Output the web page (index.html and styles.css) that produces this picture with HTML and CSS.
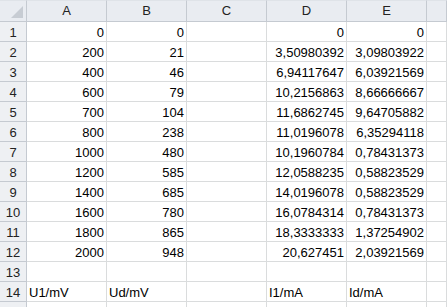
FILE: index.html
```html
<!DOCTYPE html>
<html lang="en">
<head>
    <meta charset="UTF-8">
    <title>Sheet1</title>
    <link rel="stylesheet" href="styles.css">
</head>
<body>
    <div class="sheet">
        <div class="corner"><span class="tri"></span></div>
        <div class="colhead">A</div>
        <div class="colhead">B</div>
        <div class="colhead">C</div>
        <div class="colhead">D</div>
        <div class="colhead">E</div>
        <div class="colhead"></div>

        <div class="rowhead">1</div><div class="cell num">0</div><div class="cell num">0</div><div class="cell"></div><div class="cell num">0</div><div class="cell num">0</div><div class="cell"></div>
        <div class="rowhead">2</div><div class="cell num">200</div><div class="cell num">21</div><div class="cell"></div><div class="cell num">3,50980392</div><div class="cell num">3,09803922</div><div class="cell"></div>
        <div class="rowhead">3</div><div class="cell num">400</div><div class="cell num">46</div><div class="cell"></div><div class="cell num">6,94117647</div><div class="cell num">6,03921569</div><div class="cell"></div>
        <div class="rowhead">4</div><div class="cell num">600</div><div class="cell num">79</div><div class="cell"></div><div class="cell num">10,2156863</div><div class="cell num">8,66666667</div><div class="cell"></div>
        <div class="rowhead">5</div><div class="cell num">700</div><div class="cell num">104</div><div class="cell"></div><div class="cell num">11,6862745</div><div class="cell num">9,64705882</div><div class="cell"></div>
        <div class="rowhead">6</div><div class="cell num">800</div><div class="cell num">238</div><div class="cell"></div><div class="cell num">11,0196078</div><div class="cell num">6,35294118</div><div class="cell"></div>
        <div class="rowhead">7</div><div class="cell num">1000</div><div class="cell num">480</div><div class="cell"></div><div class="cell num">10,1960784</div><div class="cell num">0,78431373</div><div class="cell"></div>
        <div class="rowhead">8</div><div class="cell num">1200</div><div class="cell num">585</div><div class="cell"></div><div class="cell num">12,0588235</div><div class="cell num">0,58823529</div><div class="cell"></div>
        <div class="rowhead">9</div><div class="cell num">1400</div><div class="cell num">685</div><div class="cell"></div><div class="cell num">14,0196078</div><div class="cell num">0,58823529</div><div class="cell"></div>
        <div class="rowhead">10</div><div class="cell num">1600</div><div class="cell num">780</div><div class="cell"></div><div class="cell num">16,0784314</div><div class="cell num">0,78431373</div><div class="cell"></div>
        <div class="rowhead">11</div><div class="cell num">1800</div><div class="cell num">865</div><div class="cell"></div><div class="cell num">18,3333333</div><div class="cell num">1,37254902</div><div class="cell"></div>
        <div class="rowhead">12</div><div class="cell num">2000</div><div class="cell num">948</div><div class="cell"></div><div class="cell num">20,627451</div><div class="cell num">2,03921569</div><div class="cell"></div>
        <div class="rowhead">13</div><div class="cell"></div><div class="cell"></div><div class="cell"></div><div class="cell"></div><div class="cell"></div><div class="cell"></div>
        <div class="rowhead">14</div><div class="cell">U1/mV</div><div class="cell">Ud/mV</div><div class="cell"></div><div class="cell">I1/mA</div><div class="cell">Id/mA</div><div class="cell"></div>
        <div class="rowhead"></div><div class="cell"></div><div class="cell"></div><div class="cell"></div><div class="cell"></div><div class="cell"></div><div class="cell"></div>
    </div>
</body>
</html>
```

FILE: styles.css
```css
body {
    margin: 0;
    background: #fff;
    font-family: "Liberation Sans", Arial, sans-serif;
    font-size: 13px;
    color: #000;
}
.sheet {
    display: grid;
    grid-template-columns: 27px repeat(5, 80px) 1fr;
    grid-template-rows: 22px repeat(15, 20px);
    overflow: hidden;
    height: 307px;
}
.corner, .colhead, .rowhead, .cell {
    box-sizing: border-box;
    border-right: 1px solid #dadcdd;
    border-bottom: 1px solid #dadcdd;
    white-space: nowrap;
    overflow: hidden;
}
.corner, .colhead {
    background: #e9ecf1;
    border-color: #c5cad1;
    border-top: 1px solid #dfe3e8;
}
.corner {
    position: relative;
}
.tri {
    position: absolute;
    right: 3px;
    bottom: 3px;
    width: 0;
    height: 0;
    border-left: 12px solid transparent;
    border-bottom: 12px solid #c7ccd3;
}
.colhead {
    text-align: center;
    line-height: 20px;
    color: #222;
}
.rowhead {
    background: #eef0f3;
    border-color: #c5cad1;
    text-align: center;
    line-height: 21px;
    color: #222;
}
.cell {
    padding: 0 2px;
    line-height: 21px;
}
.num {
    text-align: right;
}
```
